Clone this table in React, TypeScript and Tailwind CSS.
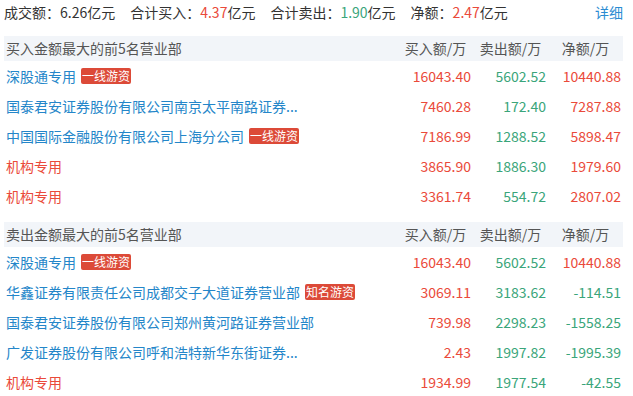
import React from 'react'

interface Row {
  name: string
  tag?: string
  buy: string
  sell: string
  net: string
  inst?: boolean
}

const buyRows: Row[] = [
  { name: '深股通专用', tag: '一线游资', buy: '16043.40', sell: '5602.52', net: '10440.88' },
  { name: '国泰君安证券股份有限公司南京太平南路证券...', buy: '7460.28', sell: '172.40', net: '7287.88' },
  { name: '中国国际金融股份有限公司上海分公司', tag: '一线游资', buy: '7186.99', sell: '1288.52', net: '5898.47' },
  { name: '机构专用', inst: true, buy: '3865.90', sell: '1886.30', net: '1979.60' },
  { name: '机构专用', inst: true, buy: '3361.74', sell: '554.72', net: '2807.02' },
]

const sellRows: Row[] = [
  { name: '深股通专用', tag: '一线游资', buy: '16043.40', sell: '5602.52', net: '10440.88' },
  { name: '华鑫证券有限责任公司成都交子大道证券营业部', tag: '知名游资', buy: '3069.11', sell: '3183.62', net: '-114.51' },
  { name: '国泰君安证券股份有限公司郑州黄河路证券营业部', buy: '739.98', sell: '2298.23', net: '-1558.25' },
  { name: '广发证券股份有限公司呼和浩特新华东街证券...', buy: '2.43', sell: '1997.82', net: '-1995.39' },
  { name: '机构专用', inst: true, buy: '1934.99', sell: '1977.54', net: '-42.55' },
]

function Section({ title, rows }: { title: string; rows: Row[] }) {
  return (
    <div>
      {/* header band */}
      <div className="flex h-[25px] items-center bg-[#f2f5f9] text-[#555]">
        <div className="flex-1 pl-[2px]">{title}</div>
        <div className="w-[75px] text-center">买入额/万</div>
        <div className="w-[75px] text-center">卖出额/万</div>
        <div className="w-[75px] text-center">净额/万</div>
      </div>
      {rows.map((r, i) => (
        <div key={i} className="flex h-[30px] items-center">
          <div className="flex flex-1 items-center pl-[2px] whitespace-nowrap">
            <span className={r.inst ? 'text-[#ea4a3a]' : 'text-[#2486c9]'}>{r.name}</span>
            {r.tag && (
              <span className="ml-[5px] rounded-[2px] bg-[#dc4a38] px-[1px] text-[12px] leading-[16px] text-white">
                {r.tag}
              </span>
            )}
          </div>
          <div className="w-[75px] pr-[2px] text-right text-[#ea4a3a]">{r.buy}</div>
          <div className="w-[75px] pr-[2px] text-right text-[#3aa57a]">{r.sell}</div>
          <div
            className={
              'w-[75px] pr-[2px] text-right ' +
              (r.net.startsWith('-') ? 'text-[#3aa57a]' : 'text-[#ea4a3a]')
            }
          >
            {r.net}
          </div>
        </div>
      ))}
    </div>
  )
}

export default function App() {
  return (
    <div
      className="h-[396px] w-[633px] bg-white px-1 text-[14px] text-[#333]"
      style={{ fontFamily: '"Noto Sans CJK SC", "Noto Sans", sans-serif' }}
    >
      <div className="mr-[6px]">
        {/* summary line */}
        <div className="flex h-6 items-center">
          <span>成交额：6.26亿元</span>
          <span className="ml-[15px]">
            合计买入：<span className="text-[#ea4a3a]">4.37</span>亿元
          </span>
          <span className="ml-[15px]">
            合计卖出：<span className="text-[#3aa57a]">1.90</span>亿元
          </span>
          <span className="ml-[15px]">
            净额：<span className="text-[#ea4a3a]">2.47</span>亿元
          </span>
          <span className="ml-auto text-[#2a8cd2]">详细</span>
        </div>

        <div className="mt-3">
          <Section title="买入金额最大的前5名营业部" rows={buyRows} />
        </div>
        <div className="mt-[11px]">
          <Section title="卖出金额最大的前5名营业部" rows={sellRows} />
        </div>
      </div>
    </div>
  )
}
